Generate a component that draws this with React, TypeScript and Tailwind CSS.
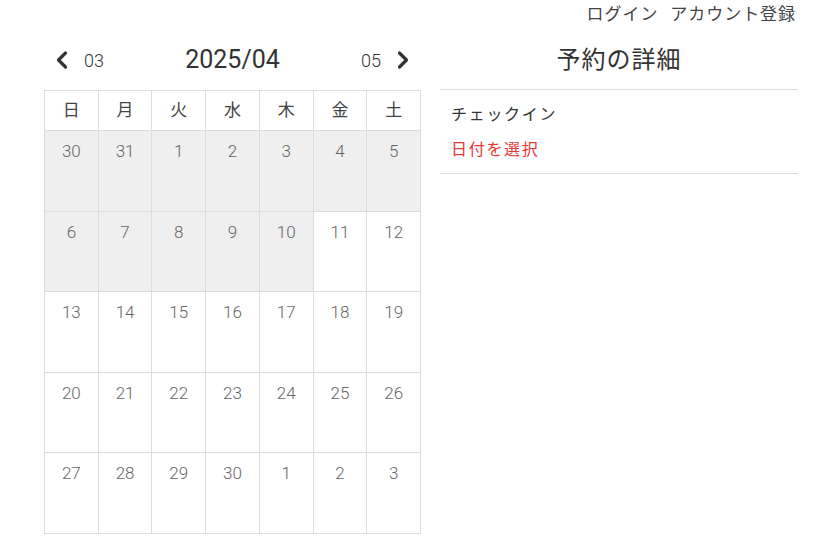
import React from "react";
import { ChevronLeft, ChevronRight } from "lucide-react";

const weekDays = ["日", "月", "火", "水", "木", "金", "土"];

const weeks: number[][] = [
  [30, 31, 1, 2, 3, 4, 5],
  [6, 7, 8, 9, 10, 11, 12],
  [13, 14, 15, 16, 17, 18, 19],
  [20, 21, 22, 23, 24, 25, 26],
  [27, 28, 29, 30, 1, 2, 3],
];

// first 12 cells (30 Mar .. 10 Apr) are in the past
const isPast = (row: number, col: number) => row * 7 + col < 12;

const Calendar = () => (
  <div className="w-[377px]">
    <div className="flex h-[60px] items-center justify-between pl-[4px] pr-[4px] text-[#333]">
      <button className="flex items-center gap-[8px]">
        <ChevronLeft size={28} strokeWidth={2.75} className="text-[#333]" />
        <span className="text-[18px] font-light">03</span>
      </button>
      <h2 className="text-[25px]">2025/04</h2>
      <button className="flex items-center gap-[8px]">
        <span className="text-[18px] font-light">05</span>
        <ChevronRight size={28} strokeWidth={2.75} className="text-[#333]" />
      </button>
    </div>
    <div className="grid grid-cols-7 border-l border-t border-[#dcdcdc]">
      {weekDays.map((d) => (
        <div
          key={d}
          className="flex h-[40px] items-center justify-center border-b border-r border-[#dcdcdc] text-[17px] text-[#444]"
        >
          {d}
        </div>
      ))}
      {weeks.map((week, r) =>
        week.map((day, c) => (
          <div
            key={`${r}-${c}`}
            className={`h-[80.5px] border-b border-r border-[#dcdcdc] pt-[8px] text-center text-[17px] font-light text-[#666] ${
              isPast(r, c) ? "bg-[#efefef]" : "bg-white"
            }`}
          >
            {day}
          </div>
        ))
      )}
    </div>
  </div>
);

const Details = () => (
  <div className="w-[358px]">
    <div className="flex h-[60px] items-center justify-center border-b border-[#dcdcdc]">
      <h2 className="text-[24px] tracking-[1px] text-[#333]">予約の詳細</h2>
    </div>
    <div className="border-b border-[#dcdcdc] px-[11px] pb-[6px] pt-[7px] text-[16px] leading-[35px] tracking-[1.7px]">
      <p className="text-[#333]">チェックイン</p>
      <p className="text-[#e53935]">日付を選択</p>
    </div>
  </div>
);

export default function App() {
  return (
    <div
      className="h-[545px] w-[820px] overflow-hidden bg-white"
      style={{ fontFamily: 'Roboto, "Noto Sans CJK JP", sans-serif' }}
    >
      <header className="flex h-[30px] items-center justify-end gap-[12px] pr-[24px] text-[17px] tracking-[0.95px] text-[#444]">
        <a>ログイン</a>
        <a>アカウント登録</a>
      </header>
      <main className="flex gap-[19px] pl-[44px]">
        <Calendar />
        <Details />
      </main>
    </div>
  );
}
